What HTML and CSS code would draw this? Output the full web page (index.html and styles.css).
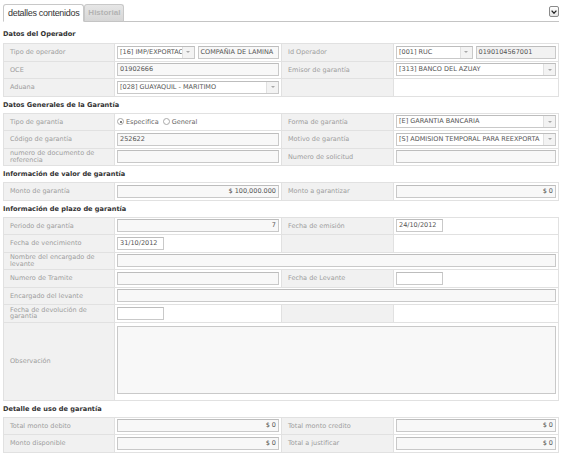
FILE: index.html
```html
<!DOCTYPE html>
<html lang="es">
<head>
<meta charset="utf-8">
<title>detalles contenidos</title>
<link rel="stylesheet" href="styles.css">
</head>
<body>
<div class="page">
  <div class="tabbar">
    <div class="tab active">detalles contenidos</div>
    <div class="tab inactive">Historial</div>
    <div class="menu-btn">
      <svg width="6" height="4" viewBox="0 0 6 4"><path d="M0.6 0.6 L3 3.2 L5.4 0.6" fill="none" stroke="#222" stroke-width="1.3"/></svg>
    </div>
  </div>

  <div class="section-title first">Datos del Operador</div>
  <div class="form">
    <div class="lbl">Tipo de operador</div>
    <div class="val"><div class="select"><span class="txt">[16] IMP/EXPORTAC</span><span class="arr"></span></div><div class="inp">COMPAÑIA DE LAMINA</div></div>
    <div class="lbl">Id Operador</div>
    <div class="val"><div class="select"><span class="txt">[001] RUC</span><span class="arr"></span></div><div class="inp grey">0190104567001</div></div>

    <div class="lbl">OCE</div>
    <div class="val"><div class="inp">01902666</div></div>
    <div class="lbl">Emisor de garantía</div>
    <div class="val"><div class="select"><span class="txt">[313] BANCO DEL AZUAY</span><span class="arr"></span></div></div>

    <div class="lbl">Aduana</div>
    <div class="val"><div class="select"><span class="txt">[028] GUAYAQUIL - MARITIMO</span><span class="arr"></span></div></div>
    <div class="lbl"></div>
    <div class="val"></div>
  </div>

  <div class="section-title">Datos Generales de la Garantía</div>
  <div class="form">
    <div class="lbl">Tipo de garantía</div>
    <div class="val radios">
      <span class="radio checked"></span><span class="rtext">Especifica</span>
      <span class="radio second"></span><span class="rtext">General</span>
    </div>
    <div class="lbl">Forma de garantía</div>
    <div class="val"><div class="select"><span class="txt">[E] GARANTIA BANCARIA</span><span class="arr"></span></div></div>

    <div class="lbl">Código de garantía</div>
    <div class="val"><div class="inp">252622</div></div>
    <div class="lbl">Motivo de garantía</div>
    <div class="val"><div class="select"><span class="txt">[S] ADMISION TEMPORAL PARA REEXPORTA</span><span class="arr"></span></div></div>

    <div class="lbl">numero de documento de referencia</div>
    <div class="val"><div class="inp"></div></div>
    <div class="lbl">Numero de solicitud</div>
    <div class="val"><div class="inp"></div></div>
  </div>

  <div class="section-title">Información de valor de garantía</div>
  <div class="form">
    <div class="lbl">Monto de garantía</div>
    <div class="val"><div class="inp num">$ 100,000.000</div></div>
    <div class="lbl">Monto a garantizar</div>
    <div class="val"><div class="inp num">$ 0</div></div>
  </div>

  <div class="section-title">Información de plazo de garantía</div>
  <div class="form with-notes">
    <div class="lbl">Periodo de garantía</div>
    <div class="val"><div class="inp num">7</div></div>
    <div class="lbl">Fecha de emisión</div>
    <div class="val"><div class="inp date">24/10/2012</div></div>

    <div class="lbl">Fecha de vencimiento</div>
    <div class="val"><div class="inp date">31/10/2012</div></div>
    <div class="lbl"></div>
    <div class="val"></div>

    <div class="lbl">Nombre del encargado de levante</div>
    <div class="val span3"><div class="inp"></div></div>

    <div class="lbl">Numero de Tramite</div>
    <div class="val"><div class="inp"></div></div>
    <div class="lbl">Fecha de Levante</div>
    <div class="val"><div class="inp date"></div></div>

    <div class="lbl">Encargado del levante</div>
    <div class="val span3"><div class="inp"></div></div>

    <div class="lbl">Fecha de devolución de garantía</div>
    <div class="val"><div class="inp date"></div></div>
    <div class="lbl"></div>
    <div class="val"></div>

    <div class="lbl">Observación</div>
    <div class="val span3 top"><div class="textarea"></div></div>
  </div>

  <div class="section-title">Detalle de uso de garantía</div>
  <div class="form">
    <div class="lbl">Total monto debito</div>
    <div class="val"><div class="inp num">$ 0</div></div>
    <div class="lbl">Total monto credito</div>
    <div class="val"><div class="inp num">$ 0</div></div>

    <div class="lbl">Monto disponible</div>
    <div class="val"><div class="inp num">$ 0</div></div>
    <div class="lbl">Total a justificar</div>
    <div class="val"><div class="inp num">$ 0</div></div>
  </div>
</div>
</body>
</html>
```

FILE: styles.css
```css
html, body {
  margin: 0;
  padding: 0;
  background: #ffffff;
}

body {
  font-family: "DejaVu Sans", Verdana, sans-serif;
}

.page {
  width: 556px;
  margin-left: 3px;
}

/* ---------- tabs ---------- */
.tabbar {
  display: flex;
  align-items: flex-end;
  height: 17px;
  padding-top: 4px;
  border-bottom: 1px solid #c4c4c4;
}

.tab {
  box-sizing: border-box;
  height: 18px;
  margin-bottom: -1px;
  border: 1px solid #c8c8c8;
  border-radius: 3px 3px 0 0;
  white-space: nowrap;
}

.tab.active {
  background: #ffffff;
  border-bottom-color: #ffffff;
  padding: 0 4px;
  font-family: "Liberation Sans", Arial, sans-serif;
  font-size: 9px;
  letter-spacing: -0.3px;
  line-height: 17px;
  color: #333333;
}

.tab.inactive {
  background: linear-gradient(#e6e6e6, #d6d6d6);
  border-bottom-color: #c4c4c4;
  padding: 0 3px;
  font-family: "Liberation Sans", Arial, sans-serif;
  font-weight: bold;
  font-size: 8px;
  line-height: 16px;
  color: #b3b3b3;
}

.menu-btn {
  margin-left: auto;
  align-self: flex-start;
  margin-top: 2px;
  box-sizing: border-box;
  width: 10px;
  height: 11px;
  border: 1px solid #8a8a8a;
  border-radius: 2px;
  background: linear-gradient(#ffffff, #e4e4e4);
  display: flex;
  align-items: center;
  justify-content: center;
}

/* ---------- section titles ---------- */
.section-title {
  height: 16px;
  line-height: 16px;
  font-weight: bold;
  font-size: 6.6px;
  color: #333333;
  white-space: nowrap;
}

.section-title.first {
  height: 17px;
  line-height: 17px;
  padding-top: 4px;
}

/* ---------- form grid ---------- */
.form {
  display: grid;
  grid-template-columns: 110px 166px 111px 164px;
  grid-auto-rows: 16.5px;
  gap: 1px;
  background: #e1e1e1;
  border: 1px solid #e1e1e1;
}

.form.with-notes {
  grid-template-rows: repeat(6, 16.5px) 77px;
}

.lbl {
  background: #f1f1f1;
  color: #9d9d9d;
  font-size: 6.5px;
  line-height: 1;
  padding: 0 4px 0 6px;
  display: flex;
  align-items: center;
  overflow: hidden;
}

.val {
  background: #ffffff;
  padding: 0 2px;
  display: flex;
  align-items: center;
  gap: 3px;
  min-width: 0;
}

.val.span3 {
  grid-column: span 3;
}

.val.top {
  align-items: flex-start;
}

.inp {
  flex: 1;
  min-width: 0;
  box-sizing: border-box;
  height: 13px;
  border: 1px solid #c9c9c9;
  border-top-color: #bdbdbd;
  background: #f8f8f8;
  color: #555555;
  font-size: 6.5px;
  line-height: 11px;
  padding: 0 2px;
  white-space: nowrap;
  overflow: hidden;
}

.inp.grey {
  background: #f2f2f2;
}

.inp.num {
  text-align: right;
}

.inp.date {
  flex: 0 0 47px;
  background: #ffffff;
}

.select {
  flex: 1;
  min-width: 0;
  box-sizing: border-box;
  height: 13px;
  border: 1px solid #c9c9c9;
  border-top-color: #bdbdbd;
  background: #ffffff;
  display: flex;
}

.select .txt {
  flex: 1;
  min-width: 0;
  padding: 0 2px;
  color: #555555;
  font-size: 6.5px;
  line-height: 11px;
  white-space: nowrap;
  overflow: hidden;
}

.select .arr {
  flex: 0 0 11px;
  border-left: 1px solid #e0e0e0;
  background: #f3f3f3;
  display: flex;
  align-items: center;
  justify-content: center;
}

.select .arr::after {
  content: "";
  width: 0;
  height: 0;
  border-left: 2px solid transparent;
  border-right: 2px solid transparent;
  border-top: 2px solid #a8a8a8;
}

.textarea {
  flex: 1;
  box-sizing: border-box;
  height: 68px;
  margin-top: 3px;
  border: 1px solid #c9c9c9;
  background: #f8f8f8;
}

/* ---------- radios ---------- */
.val.radios {
  gap: 2px;
}

.radio {
  box-sizing: border-box;
  width: 7px;
  height: 7px;
  border: 1px solid #a9a9a9;
  border-radius: 50%;
  background: #ffffff;
  display: flex;
  align-items: center;
  justify-content: center;
}

.radio.checked::after {
  content: "";
  width: 2px;
  height: 2px;
  border-radius: 50%;
  background: #555555;
}

.radio.second {
  margin-left: 2px;
}

.rtext {
  color: #666666;
  font-size: 6.5px;
  line-height: 1;
  white-space: nowrap;
}
```
